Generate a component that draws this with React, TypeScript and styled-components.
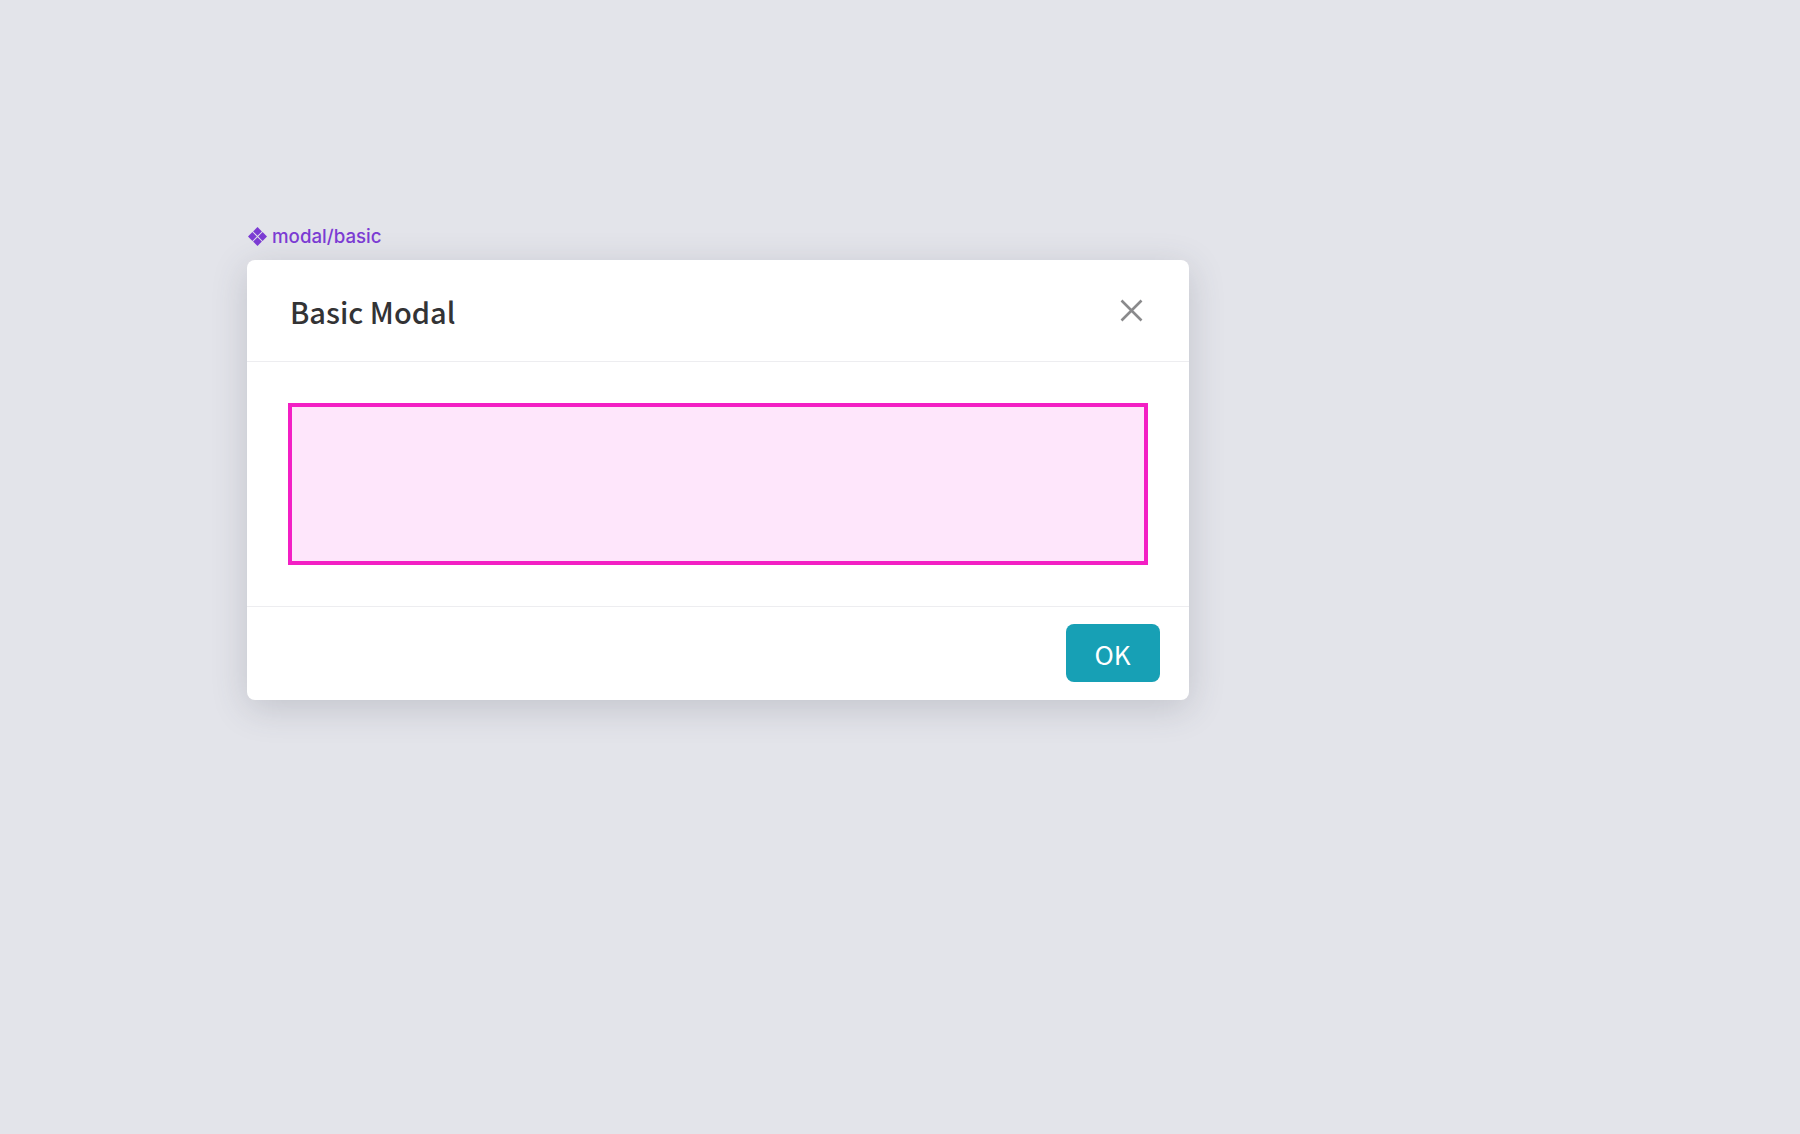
import React, { FC } from 'react';
import styled, { createGlobalStyle } from 'styled-components';

const GlobalStyle = createGlobalStyle`
    html, body {
        margin: 0;
        padding: 0;
        background: #e3e4ea;
    }
`;

const Page = styled.div`
    box-sizing: border-box;
    width: 100%;
    min-height: 1134px;
    padding: 222px 0 0 247px;
    background: #e3e4ea;
`;

const ComponentLabel = styled.div`
    display: flex;
    align-items: center;
    gap: 4px;
    height: 28px;
    margin-bottom: 10px;
    padding-top: 1px;
    box-sizing: border-box;
    font-family: Inter, sans-serif;
    font-size: 18.7px;
    font-weight: 500;
    line-height: 28px;
    color: #7b3bd3;
`;

const Modal = styled.div`
    box-sizing: border-box;
    display: flex;
    flex-direction: column;
    width: 941.5px;
    height: 440px;
    border-radius: 8px;
    background: #ffffff;
    box-shadow: 0 8px 36px rgba(60, 64, 80, 0.2);
`;

const Header = styled.div`
    box-sizing: border-box;
    display: flex;
    align-items: center;
    justify-content: space-between;
    height: 101.5px;
    padding: 1px 46px 0 43px;
    border-bottom: 1px solid #ededf0;
`;

const Title = styled.h2`
    margin: 0;
    font-family: 'Noto Sans CJK SC', 'Noto Sans', sans-serif;
    font-size: 29px;
    font-weight: 500;
    line-height: 48px;
    color: #333335;
`;

const CloseButton = styled.button`
    display: flex;
    padding: 0;
    border: 0;
    background: none;
    color: #8a8a8c;
`;

const Body = styled.div`
    box-sizing: border-box;
    flex: 1;
    padding: 41px 41px;
    border-bottom: 1px solid #ededf0;
`;

const Placeholder = styled.div`
    box-sizing: border-box;
    width: 860px;
    height: 162px;
    border: 4px solid #f31fc4;
    background: #fee6fb;
`;

const Footer = styled.div`
    box-sizing: border-box;
    display: flex;
    justify-content: flex-end;
    height: 93px;
    padding: 17px 29px 0 0;
`;

const PrimaryButton = styled.button`
    width: 94px;
    height: 58px;
    padding: 0;
    border: 0;
    border-radius: 8px;
    background: #17a0b5;
    font-family: 'Noto Sans CJK SC', 'Noto Sans', sans-serif;
    font-size: 26px;
    font-weight: 400;
    color: #ffffff;
`;

const ComponentIcon: FC = () => (
    <svg width="21" height="21" viewBox="0 0 21 21" fill="#7b3bd3">
        <path d="M10.5 1l4.4 4.4-4.4 4.4-4.4-4.4z" />
        <path d="M10.5 11.2l4.4 4.4-4.4 4.4-4.4-4.4z" />
        <path d="M5.4 6.1l4.4 4.4-4.4 4.4L1 10.5z" />
        <path d="M15.6 6.1l4.4 4.4-4.4 4.4-4.4-4.4z" />
    </svg>
);

const CloseIcon: FC = () => (
    <svg width="23" height="23" viewBox="0 0 23 23" fill="none" stroke="currentColor" strokeWidth="2.6">
        <path d="M1.5 1.5l20 20M21.5 1.5l-20 20" />
    </svg>
);

const App: FC = () => (
    <>
        <GlobalStyle />
        <Page>
            <ComponentLabel>
                <ComponentIcon />
                modal/basic
            </ComponentLabel>
            <Modal>
                <Header>
                    <Title>Basic Modal</Title>
                    <CloseButton>
                        <CloseIcon />
                    </CloseButton>
                </Header>
                <Body>
                    <Placeholder />
                </Body>
                <Footer>
                    <PrimaryButton>OK</PrimaryButton>
                </Footer>
            </Modal>
        </Page>
    </>
);

export default App;
